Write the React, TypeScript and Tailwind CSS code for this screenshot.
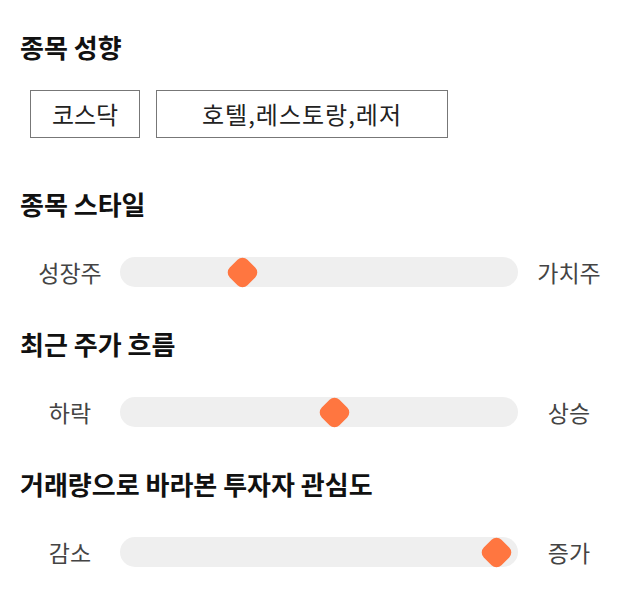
const sliders = [
  { title: '종목 스타일', left: '성장주', right: '가치주', pos: 243 },
  { title: '최근 주가 흐름', left: '하락', right: '상승', pos: 335 },
  { title: '거래량으로 바라본 투자자 관심도', left: '감소', right: '증가', pos: 497 },
];

const TRACK_LEFT = 121;

function Slider({ left, right, pos }: { left: string; right: string; pos: number }) {
  return (
    <div className="flex items-center h-[50px]">
      <div className="w-[100px] text-center text-[23px] text-[#444]">{left}</div>
      <div className="relative w-[398px] h-[30px] rounded-full bg-[#efefef]">
        {/* thumb */}
        <div
          className="absolute top-1/2 w-[25px] h-[25px] rounded-[7px] bg-[#ff7640] rotate-45"
          style={{ left: pos - TRACK_LEFT - 12.5, marginTop: -12.5 }}
        />
      </div>
      <div className="w-[100px] ml-[1px] text-center text-[23px] text-[#444]">{right}</div>
    </div>
  );
}

export default function App() {
  return (
    <div
      className="w-[640px] h-[606px] bg-white px-5 pt-[32px] text-[#111]"
      style={{ fontFamily: '"Noto Sans CJK KR", "Noto Sans", sans-serif' }}
    >
      <h2 className="text-[26px] font-bold leading-[30px]">종목 성향</h2>
      <div className="flex gap-4 ml-[10px] mt-[28px]">
        <div className="w-[110px] h-[48px] border border-[#777] flex items-center justify-center text-[24px] text-[#222]">
          코스닥
        </div>
        <div className="w-[292px] h-[48px] border border-[#777] flex items-center justify-center text-[24px] tracking-[1px] text-[#222]">
          호텔,레스토랑,레저
        </div>
      </div>

      {sliders.map((s, i) => (
        <div key={s.title} className={i === 0 ? 'mt-[51px]' : 'mt-[32px]'}>
          <h2 className="text-[26px] font-bold leading-[30px]">{s.title}</h2>
          <div className="mt-[28px]">
            <Slider left={s.left} right={s.right} pos={s.pos} />
          </div>
        </div>
      ))}
    </div>
  );
}
